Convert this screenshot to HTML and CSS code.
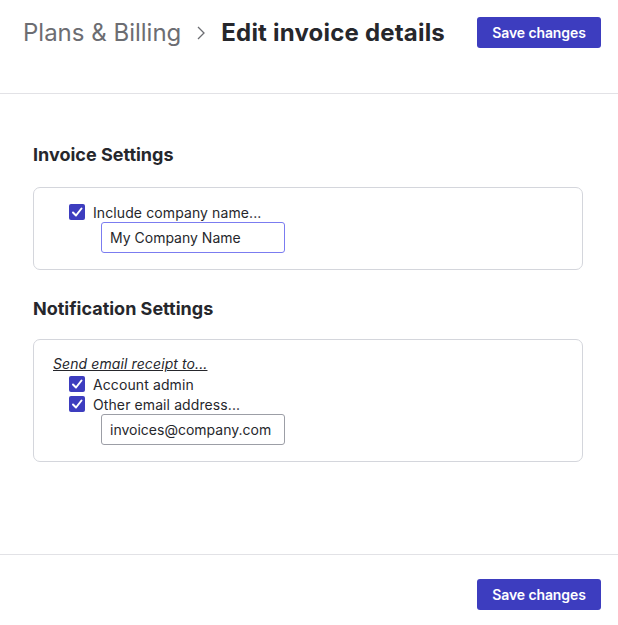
FILE: index.html
```html
<!DOCTYPE html>
<html>
<head>
<meta charset="utf-8">
<link rel="stylesheet" href="styles.css">
</head>
<body>
<div class="page">
  <header class="header">
    <div class="crumbs">
      <span class="crumb">Plans &amp; Billing</span>
      <svg class="chev" width="10" height="14" viewBox="0 0 10 14"><polyline points="2,1 8,7 2,13" fill="none" stroke="#6c6d72" stroke-width="1.3"/></svg>
      <h1 class="title">Edit invoice details</h1>
    </div>
    <button class="btn">Save changes</button>
  </header>
  <main class="main">
    <h2 class="section-title">Invoice Settings</h2>
    <div class="card card-invoice">
      <div class="opt">
        <span class="check"><svg width="12" height="12" viewBox="0 0 12 12"><polyline points="2,6.5 5,9.5 10.5,2.5" fill="none" stroke="#fff" stroke-width="2" stroke-linecap="round" stroke-linejoin="round"/></svg></span>
        <span class="opt-label">Include company name...</span>
      </div>
      <div class="field"><input class="text-input focused" type="text" value="My Company Name"></div>
    </div>
    <h2 class="section-title">Notification Settings</h2>
    <div class="card card-notify">
      <div class="legend">Send email receipt to...</div>
      <div class="opt">
        <span class="check"><svg width="12" height="12" viewBox="0 0 12 12"><polyline points="2,6.5 5,9.5 10.5,2.5" fill="none" stroke="#fff" stroke-width="2" stroke-linecap="round" stroke-linejoin="round"/></svg></span>
        <span class="opt-label">Account admin</span>
      </div>
      <div class="opt">
        <span class="check"><svg width="12" height="12" viewBox="0 0 12 12"><polyline points="2,6.5 5,9.5 10.5,2.5" fill="none" stroke="#fff" stroke-width="2" stroke-linecap="round" stroke-linejoin="round"/></svg></span>
        <span class="opt-label">Other email address...</span>
      </div>
      <div class="field"><input class="text-input" type="text" value="invoices@company.com"></div>
    </div>
  </main>
  <footer class="footer">
    <button class="btn">Save changes</button>
  </footer>
</div>
</body>
</html>
```
FILE: styles.css
```css
* { box-sizing: border-box; }
html, body { margin: 0; padding: 0; background: #fff; }
body {
  font-family: Inter, "Noto Sans", sans-serif;
  color: #26272c;
}
.page {
  height: 625px;
  display: flex;
  flex-direction: column;
}
.header {
  height: 94px;
  flex: none;
  border-bottom: 1px solid #e2e2e6;
  display: flex;
  align-items: flex-start;
  justify-content: space-between;
  padding: 17px 17px 0 23px;
}
.crumbs {
  display: flex;
  align-items: center;
  height: 31px;
}
.crumb {
  font-size: 24px;
  color: #6c6d72;
}
.chev { margin: 0 15px 0 15px; }
.title {
  margin: 0;
  font-size: 24px;
  font-weight: 700;
  color: #26272c;
  letter-spacing: 0.2px;
}
.btn {
  font-family: Inter, "Noto Sans", sans-serif;
  height: 31px;
  width: 124px;
  padding: 0;
  border: none;
  border-radius: 3px;
  background: #3d3dbf;
  color: #fff;
  font-size: 14px;
  font-weight: 600;
  letter-spacing: -0.1px;
}
.main {
  flex: 1;
  padding: 49px 35px 0 33px;
}
.section-title {
  margin: 0;
  font-size: 18px;
  line-height: 24px;
  font-weight: 700;
  color: #26272c;
}
.card {
  margin: 20px 0 27px;
  border: 1px solid #d4d6dc;
  border-radius: 7px;
  padding: 14px 20px 16px 35px;
}
.card-notify { padding: 14px 20px 16px 19px; margin-top: 18px; }
.card-notify .opt, .card-notify .field { margin-left: 16px; }
.legend {
  font-size: 14px;
  font-style: italic;
  text-decoration: underline;
  line-height: 20px;
  color: #26272c;
  letter-spacing: 0.1px;
}
.opt {
  display: flex;
  align-items: center;
  height: 20px;
}
.check {
  width: 16px;
  height: 16px;
  border-radius: 2px;
  background: #3d3dbf;
  display: flex;
  align-items: center;
  justify-content: center;
  margin-right: 8px;
}
.opt-label { font-size: 14px; color: #26272c; letter-spacing: 0.1px; }
.field { padding-left: 32px; }
.text-input {
  display: block;
  width: 184px;
  height: 31px;
  border: 1px solid #9c9ea6;
  border-radius: 3px;
  padding: 0 8px;
  font-family: Inter, "Noto Sans", sans-serif;
  font-size: 14px;
  color: #26272c;
  background: #fff;
  outline: none;
}
.text-input.focused { border-color: #7b7cf0; }
.footer {
  border-top: 1px solid #e2e2e6;
  height: 71px;
  flex: none;
  display: flex;
  justify-content: flex-end;
  align-items: flex-start;
  padding: 24px 17px 0 0;
}
```
